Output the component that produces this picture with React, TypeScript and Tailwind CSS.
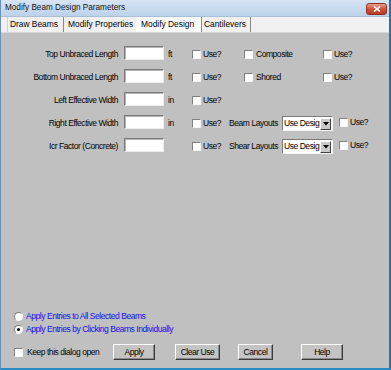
import React from "react";

const font = { fontFamily: '"Liberation Sans", Arial, sans-serif' };

const Check = ({ className = "" }: { className?: string }) => (
  <span
    className={`inline-block w-[9px] h-[9px] shrink-0 bg-white border border-t-[#808080] border-l-[#808080] border-b-[#f4f4f4] border-r-[#f4f4f4] ${className}`}
  />
);

const Field = () => (
  <span className="inline-block w-[40px] h-[14px] shrink-0 bg-white border border-t-[#7a7a7a] border-l-[#7a7a7a] border-b-[#ededed] border-r-[#ededed] shadow-[inset_1px_1px_0_#b5b5b5]" />
);

const Select = () => (
  <span className="flex items-center w-[51px] h-[15px] shrink-0 bg-white border border-t-[#7a7a7a] border-l-[#7a7a7a] border-b-[#f4f4f4] border-r-[#f4f4f4]">
    <span className="flex-1 whitespace-nowrap pl-[1px] text-[8.5px] tracking-[-0.45px] text-black">
      Use Desig
    </span>
    <span className="flex items-center justify-center w-[11px] h-[12px] mr-[1px] bg-[#c8c8c8] border border-t-white border-l-white border-b-[#404040] border-r-[#404040]">
      <svg width="6" height="4" viewBox="0 0 6 4">
        <path d="M0 0h6L3 3.5z" fill="#000" />
      </svg>
    </span>
  </span>
);

const UseBox = ({ w }: { w: string }) => (
  <div className={`flex items-center ${w}`}>
    <Check />
    <span className="ml-[2px]">Use?</span>
  </div>
);

const Row = ({
  label,
  unit,
  children,
}: {
  label: string;
  unit?: string;
  children?: React.ReactNode;
}) => (
  <div className="flex items-center h-[23px]">
    <div className="w-[118px] text-right pr-[1px] whitespace-nowrap">{label}</div>
    <div className="ml-[5px]">
      <Field />
    </div>
    <div className="w-[28px] pl-[4px]">{unit}</div>
    {children}
  </div>
);

const Btn = ({ label, w, ml }: { label: string; w: string; ml: string }) => (
  <div
    className={`${w} ${ml} h-[16px] flex items-center justify-center bg-[#c4c4c4] border border-t-white border-l-white border-b-[#3a3a3a] border-r-[#3a3a3a] shadow-[inset_-1px_-1px_0_#8a8a8a]`}
  >
    {label}
  </div>
);

export default function App() {
  return (
    <div
      style={font}
      className="w-[391px] h-[370px] flex flex-col overflow-hidden bg-[#c0c0c0] text-black border-l border-r-2 border-b-2 border-l-[#6b8fb3] border-r-[#2f6f9f] border-b-[#2a8cc2]"
    >
      {/* title bar */}
      <div className="h-[17px] shrink-0 flex items-center justify-between bg-gradient-to-b from-[#d6e4f4] to-[#bcd2ea] border-b border-[#a9bfd8]">
        <span className="pl-[4px] text-[8.2px] text-[#111]">Modify Beam Design Parameters</span>
        <span className="mr-[2px] mt-[1px] w-[21px] h-[12px] rounded-[3px] flex items-center justify-center bg-gradient-to-b from-[#e8a08e] via-[#d0503a] to-[#c03a24] border border-[#8a2f22]">
          <svg width="8" height="6" viewBox="0 0 8 6">
            <path d="M1 0.5l6 5M7 0.5l-6 5" stroke="#fff" strokeWidth="1.6" />
          </svg>
        </span>
      </div>

      {/* tabs */}
      <div className="h-[16px] shrink-0 flex items-stretch bg-[#f0f0f0] border-b border-[#d8d8d8] pl-[6px] text-[8.4px]">
        <div className="flex items-center pl-[2px] w-[57px] border-l border-r border-l-[#cfcfcf] border-r-[#8a8a8a]">
          Draw Beams
        </div>
        <div className="flex items-center pl-[4px] w-[72px]">Modify Properties</div>
        <div className="flex items-center pl-[5px] w-[66px] bg-[#fbfbfb] border-r border-[#8a8a8a]">
          Modify Design
        </div>
        <div className="flex items-center pl-[2px] w-[49px] border-r border-[#8a8a8a]">Cantilevers</div>
      </div>

      {/* body */}
      <div className="flex-1 flex flex-col text-[8.5px] tracking-[-0.45px] pt-[10px]">
        <Row label="Top Unbraced Length" unit="ft">
          <UseBox w="w-[52px]" />
          <div className="flex items-center w-[79px]">
            <Check />
            <span className="ml-[3px]">Composite</span>
          </div>
          <UseBox w="w-[50px]" />
        </Row>
        <Row label="Bottom Unbraced Length" unit="ft">
          <UseBox w="w-[52px]" />
          <div className="flex items-center w-[79px]">
            <Check />
            <span className="ml-[3px]">Shored</span>
          </div>
          <UseBox w="w-[50px]" />
        </Row>
        <Row label="Left Effective Width" unit="in">
          <UseBox w="w-[52px]" />
        </Row>
        <Row label="Right Effective Width" unit="in">
          <UseBox w="w-[35px]" />
          <div className="w-[55px] text-right pr-[4px] whitespace-nowrap">Beam Layouts</div>
          <Select />
          <div className="flex items-center ml-[6px] -mt-[3px]">
            <Check />
            <span className="ml-[2px]">Use?</span>
          </div>
        </Row>
        <Row label="Icr Factor (Concrete)">
          <UseBox w="w-[35px]" />
          <div className="w-[55px] text-right pr-[4px] whitespace-nowrap">Shear Layouts</div>
          <Select />
          <div className="flex items-center ml-[6px] -mt-[3px]">
            <Check />
            <span className="ml-[2px]">Use?</span>
          </div>
        </Row>

        {/* bottom section */}
        <div className="mt-auto pl-[13px] pb-[8px]">
          <div className="flex items-center h-[13px] text-[#1010e8]">
            <span className="w-[9px] h-[9px] rounded-full bg-white border border-t-[#808080] border-l-[#808080] border-b-[#f4f4f4] border-r-[#f4f4f4]" />
            <span className="ml-[3px]">Apply Entries to All Selected Beams</span>
          </div>
          <div className="flex items-center h-[13px] text-[#1010e8]">
            <span className="w-[9px] h-[9px] rounded-full bg-white border border-t-[#808080] border-l-[#808080] border-b-[#f4f4f4] border-r-[#f4f4f4] flex items-center justify-center">
              <span className="w-[3px] h-[3px] rounded-full bg-black" />
            </span>
            <span className="ml-[3px]">Apply Entries by Clicking Beams Individually</span>
          </div>
          <div className="flex items-center h-[16px] mt-[8px]">
            <div className="flex items-center w-[99px]">
              <Check />
              <span className="ml-[4px]">Keep this dialog open</span>
            </div>
            <Btn label="Apply" w="w-[42px]" ml="ml-0" />
            <Btn label="Clear Use" w="w-[45px]" ml="ml-[20px]" />
            <Btn label="Cancel" w="w-[35px]" ml="ml-[18px]" />
            <Btn label="Help" w="w-[42px]" ml="ml-[28px]" />
          </div>
        </div>
      </div>
    </div>
  );
}
